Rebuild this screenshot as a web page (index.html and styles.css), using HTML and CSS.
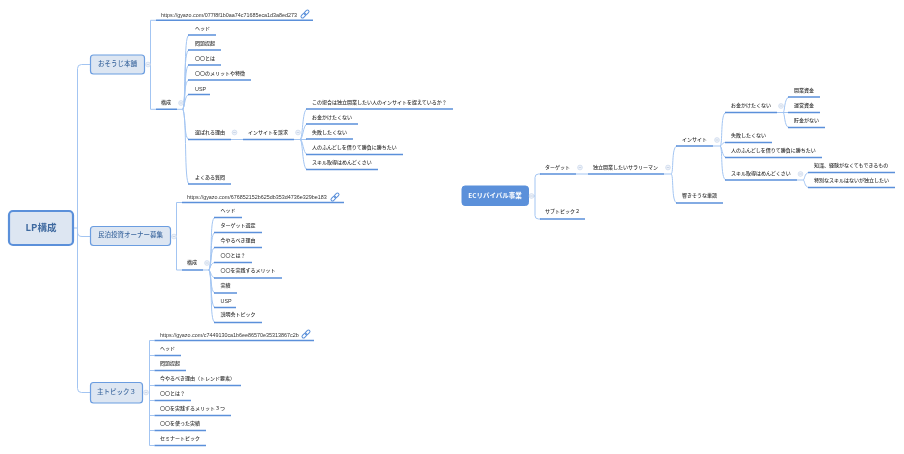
FILE: index.html
```html
<!DOCTYPE html>
<html lang="ja">
<head>
<meta charset="utf-8">
<title>LP構成</title>
<link rel="stylesheet" href="styles.css">
</head>
<body>
<svg class="map" width="904" height="454" viewBox="0 0 904 454" xmlns="http://www.w3.org/2000/svg">
  <defs>
    <g id="toggle">
      <circle class="toggle-ring" r="2.4"/>
      <path class="toggle-bar" d="M-1.3 0H1.3"/>
    </g>
    <g id="link">
      <g transform="rotate(-45)">
        <rect class="link-ring" x="-5" y="-1.5" width="5.6" height="3" rx="1.5"/>
        <rect class="link-ring" x="-0.6" y="-1.5" width="5.6" height="3" rx="1.5"/>
      </g>
    </g>
  </defs>

  <!-- connectors -->
  <g class="curve">
    <path d="M73 228H77.5"/>
    <path d="M90 64.5H81.5Q77.5 64.5 77.5 68.5V388.5Q77.5 392.5 81.5 392.5H90"/>
    <path d="M77.5 232Q77.5 236.5 82 236.5H90"/>
    <path d="M156 20.3H150.5V109.3H156"/>
    <path d="M182 202.5H176.5V270H182"/>
    <path d="M154.5 340.5H149.5V445.5H154.5"/>
    <path d="M149.5 355.5H154.5M149.5 370.5H154.5M149.5 385.5H154.5M149.5 400.5H154.5M149.5 415.5H154.5M149.5 430.5H154.5"/>
    <path d="M177 109.3H183"/>
    <path d="M183 109.3C187 100 183 36 189 35"/>
    <path d="M183 109.3C186 100 183 51 189 50"/>
    <path d="M183 109.3C186 100 184 66 189 65"/>
    <path d="M183 109.3C185 100 184 81 189 80"/>
    <path d="M183 109.3C185 104 185 95 189 94.5"/>
    <path d="M183 109.3C186 120 184 138 189 139.5"/>
    <path d="M183 109.3C187 120 184 182 189 184"/>
    <path d="M231 139.5H243"/>
    <path d="M294 139.5H300C303 139.5 302 110 307 109"/>
    <path d="M300 139.5C303 139.5 303 125 307 124"/>
    <path d="M300 139.5H307"/>
    <path d="M300 139.5C303 139.5 303 153 307 154.5"/>
    <path d="M300 139.5C303 139.5 302 168 307 169.5"/>
    <path d="M203 270H209"/>
    <path d="M209 270C213 262 209 218 215 217.5"/>
    <path d="M209 270C212 262 210 233 215 232.5"/>
    <path d="M209 270C212 265 210 248 215 247.5"/>
    <path d="M209 270C211 266 211 263 215 262.5"/>
    <path d="M209 270C211 272 211 277 215 278"/>
    <path d="M209 270C212 275 210 292 215 293"/>
    <path d="M209 270C212 277 210 306 215 307.5"/>
    <path d="M209 270C213 277 209 321 215 322.5"/>
    <path d="M541 174H538.5Q535 174 535 177.5V215.5Q535 219 538.5 219H541"/>
    <path d="M528 196H535"/>
    <path d="M576 174H588"/>
    <path d="M664 174H671"/>
    <path d="M671 174C674 174 671 147 677 146"/>
    <path d="M671 174C674 174 671 202 677 203"/>
    <path d="M713 146H720"/>
    <path d="M720 146C723 146 720 113 726 112.5"/>
    <path d="M720 146C722 146 722 142 726 142.5"/>
    <path d="M720 146C722 146 722 157 726 157.5"/>
    <path d="M720 146C723 146 720 179 726 180"/>
    <path d="M777 112.5H783"/>
    <path d="M783 112.5C785 112.5 784 98 789 97"/>
    <path d="M783 112.5H789"/>
    <path d="M783 112.5C785 112.5 784 127 789 127.5"/>
    <path d="M797 180H803"/>
    <path d="M803 180C805 180 804 173 809 172.5"/>
    <path d="M803 180C805 180 804 187 809 187.5"/>
  </g>

  <!-- node underlines -->
  <g class="rule">
    <path d="M156 20.3H313M156 109.3H177"/>
    <path d="M188 35H216M188 50H221M188 65H221M188 80H251M188 94.5H210M188 139.5H231M188 184H231"/>
    <path d="M243 139.5H294M306 109H453M306 124H358M306 139H353M306 154.5H403M306 169.5H378"/>
    <path d="M182 202.5H344M182 270H203"/>
    <path d="M214 217.5H242M214 232.5H262M214 247.5H262M214 262.5H252M214 278H282M214 293H237M214 307.5H236M214 322.5H262"/>
    <path d="M154.5 340.5H314M154.5 355.5H181M154.5 370.5H186M154.5 385.5H241M154.5 400.5H191M154.5 415.5H231M154.5 430.5H206M154.5 445.5H206"/>
    <path d="M540 174H576M588 174H664M540 219H585"/>
    <path d="M676 146H713M676 203H723"/>
    <path d="M725 112.5H777M725 142.5H772M725 157.5H822M725 180H797"/>
    <path d="M788 97H820M788 112.5H820M788 127.5H825M808 172.5H895M808 187.5H895"/>
  </g>

  <!-- boxed topics -->
  <rect class="box-root" x="9" y="211" width="64" height="34" rx="4"/>
  <rect class="box-topic" x="90.5" y="55" width="54" height="19" rx="3"/>
  <rect class="box-topic" x="90.5" y="226.5" width="80" height="19" rx="3"/>
  <rect class="box-topic" x="90.5" y="382.5" width="52" height="20.5" rx="3"/>
  <rect class="box-main" x="462" y="186" width="66.5" height="19.5" rx="3"/>
  <text class="label-root" x="41" y="230.5">LP構成</text>
  <text class="label-topic" x="117.5" y="65.5">おそうじ本舗</text>
  <text class="label-topic" x="130.5" y="237">民泊投資オーナー募集</text>
  <text class="label-topic" x="116.5" y="394">主トピック３</text>
  <text class="label-main" x="495" y="197.5">ECリバイバル事業</text>

  <!-- toggles -->
  <use href="#toggle" x="148" y="64.5"/>
  <use href="#toggle" x="181" y="103"/>
  <use href="#toggle" x="234.5" y="132.5"/>
  <use href="#toggle" x="298" y="132.5"/>
  <use href="#toggle" x="174" y="236.5"/>
  <use href="#toggle" x="207" y="263"/>
  <use href="#toggle" x="146" y="392.5"/>
  <use href="#toggle" x="531.5" y="196"/>
  <use href="#toggle" x="580" y="167.5"/>
  <use href="#toggle" x="668" y="167.5"/>
  <use href="#toggle" x="717" y="140"/>
  <use href="#toggle" x="781" y="106"/>
  <use href="#toggle" x="800.5" y="174"/>

  <!-- link icons -->
  <use href="#link" x="305" y="14"/>
  <use href="#link" x="335" y="197"/>
  <use href="#link" x="306" y="334"/>

  <!-- labels -->
  <g class="label">
    <text class="url" x="161" y="16.5">https://gyazo.com/077f8f1b0aa74c71685eca1d3a8ed273</text>
    <text x="161" y="104">構成</text>
    <text x="195" y="29.5">ヘッド</text>
    <text x="195" y="44.5">問題提起</text>
    <text x="195" y="59.5">〇〇とは</text>
    <text x="195" y="74.5">〇〇のメリットや特徴</text>
    <text class="url" x="195" y="90.5">USP</text>
    <text x="195" y="133.5">選ばれる理由</text>
    <text x="248" y="133.5">インサイトを訴求</text>
    <text x="312" y="103.5">この場合は独立開業したい人のインサイトを捉えているか？</text>
    <text x="312" y="118.5">お金かけたくない</text>
    <text x="312" y="133.5">失敗したくない</text>
    <text x="312" y="148.5">人のふんどしを借りて勝負に勝ちたい</text>
    <text x="312" y="163.5">スキル取得はめんどくさい</text>
    <text x="195" y="178.5">よくある質問</text>

    <text class="url" x="187" y="199">https://gyazo.com/676852152b625db353d4736e329be183</text>
    <text x="187" y="264">構成</text>
    <text x="220.5" y="212">ヘッド</text>
    <text x="220.5" y="227">ターゲット選定</text>
    <text x="220.5" y="242">今やるべき理由</text>
    <text x="220.5" y="257">〇〇とは？</text>
    <text x="220.5" y="272">〇〇を実践するメリット</text>
    <text x="220.5" y="287">実績</text>
    <text class="url" x="220.5" y="303">USP</text>
    <text x="220.5" y="316">説明会トピック</text>

    <text class="url" x="160" y="337">https://gyazo.com/c7449130ca1b6ee86570e35313867c2b</text>
    <text x="160" y="350">ヘッド</text>
    <text x="160" y="365">問題提起</text>
    <text x="160" y="380">今やるべき理由（トレンド要素）</text>
    <text x="160" y="395">〇〇とは？</text>
    <text x="160" y="410">〇〇を実践するメリット３つ</text>
    <text x="160" y="425">〇〇を使った実績</text>
    <text x="160" y="440">セミナートピック</text>

    <text x="545" y="168.5">ターゲット</text>
    <text x="593" y="168.5">独立開業したいサラリーマン</text>
    <text x="545" y="213">サブトピック２</text>
    <text x="682" y="140.5">インサイト</text>
    <text x="682" y="197">響きそうな単語</text>
    <text x="731" y="107">お金かけたくない</text>
    <text x="731" y="137">失敗したくない</text>
    <text x="731" y="152">人のふんどしを借りて勝負に勝ちたい</text>
    <text x="731" y="174.5">スキル取得はめんどくさい</text>
    <text x="794" y="92">開業資金</text>
    <text x="794" y="107">運営資金</text>
    <text x="794" y="122">貯金がない</text>
    <text x="814" y="167">知識、経験がなくてもできるもの</text>
    <text x="814" y="182">特別なスキルはないが独立したい</text>
  </g>
</svg>
</body>
</html>
```
FILE: styles.css
```css
html, body {
  margin: 0;
  padding: 0;
  background: #fff;
}

.map {
  display: block;
  font-family: "Noto Sans CJK JP", "Liberation Sans", sans-serif;
  filter: blur(0.3px);
}

.curve path {
  fill: none;
  stroke: #a3c5f2;
  stroke-width: 1;
}

.rule path {
  fill: none;
  stroke: #5b90da;
  stroke-width: 1.5;
}

.box-root {
  fill: #dde6f2;
  stroke: #5b90da;
  stroke-width: 2.2;
}

.box-topic {
  fill: #dde6f2;
  stroke: #6b9de0;
  stroke-width: 1.2;
}

.box-main {
  fill: #5b90da;
  stroke: #5b90da;
}

.label-root,
.label-topic,
.label-main {
  text-anchor: middle;
}

.label-root {
  font-size: 9.5px;
  font-weight: 700;
  fill: #3f6aa0;
}

.label-topic {
  font-size: 6.5px;
  font-weight: 500;
  fill: #3f6aa0;
}

.label-main {
  font-size: 6.5px;
  font-weight: 700;
  fill: #fff;
}

.label text {
  font-size: 5px;
  font-weight: 500;
  fill: #333;
}

.label .url {
  font-family: "Liberation Sans", sans-serif;
  font-size: 5.4px;
  font-weight: 400;
}

.toggle-ring {
  fill: #eef2f9;
  stroke: #c4d4ea;
  stroke-width: 0.6;
}

.toggle-bar {
  fill: none;
  stroke: #a9bcd6;
  stroke-width: 0.5;
}

.link-ring {
  fill: none;
  stroke: #5b90da;
  stroke-width: 1;
}
```
